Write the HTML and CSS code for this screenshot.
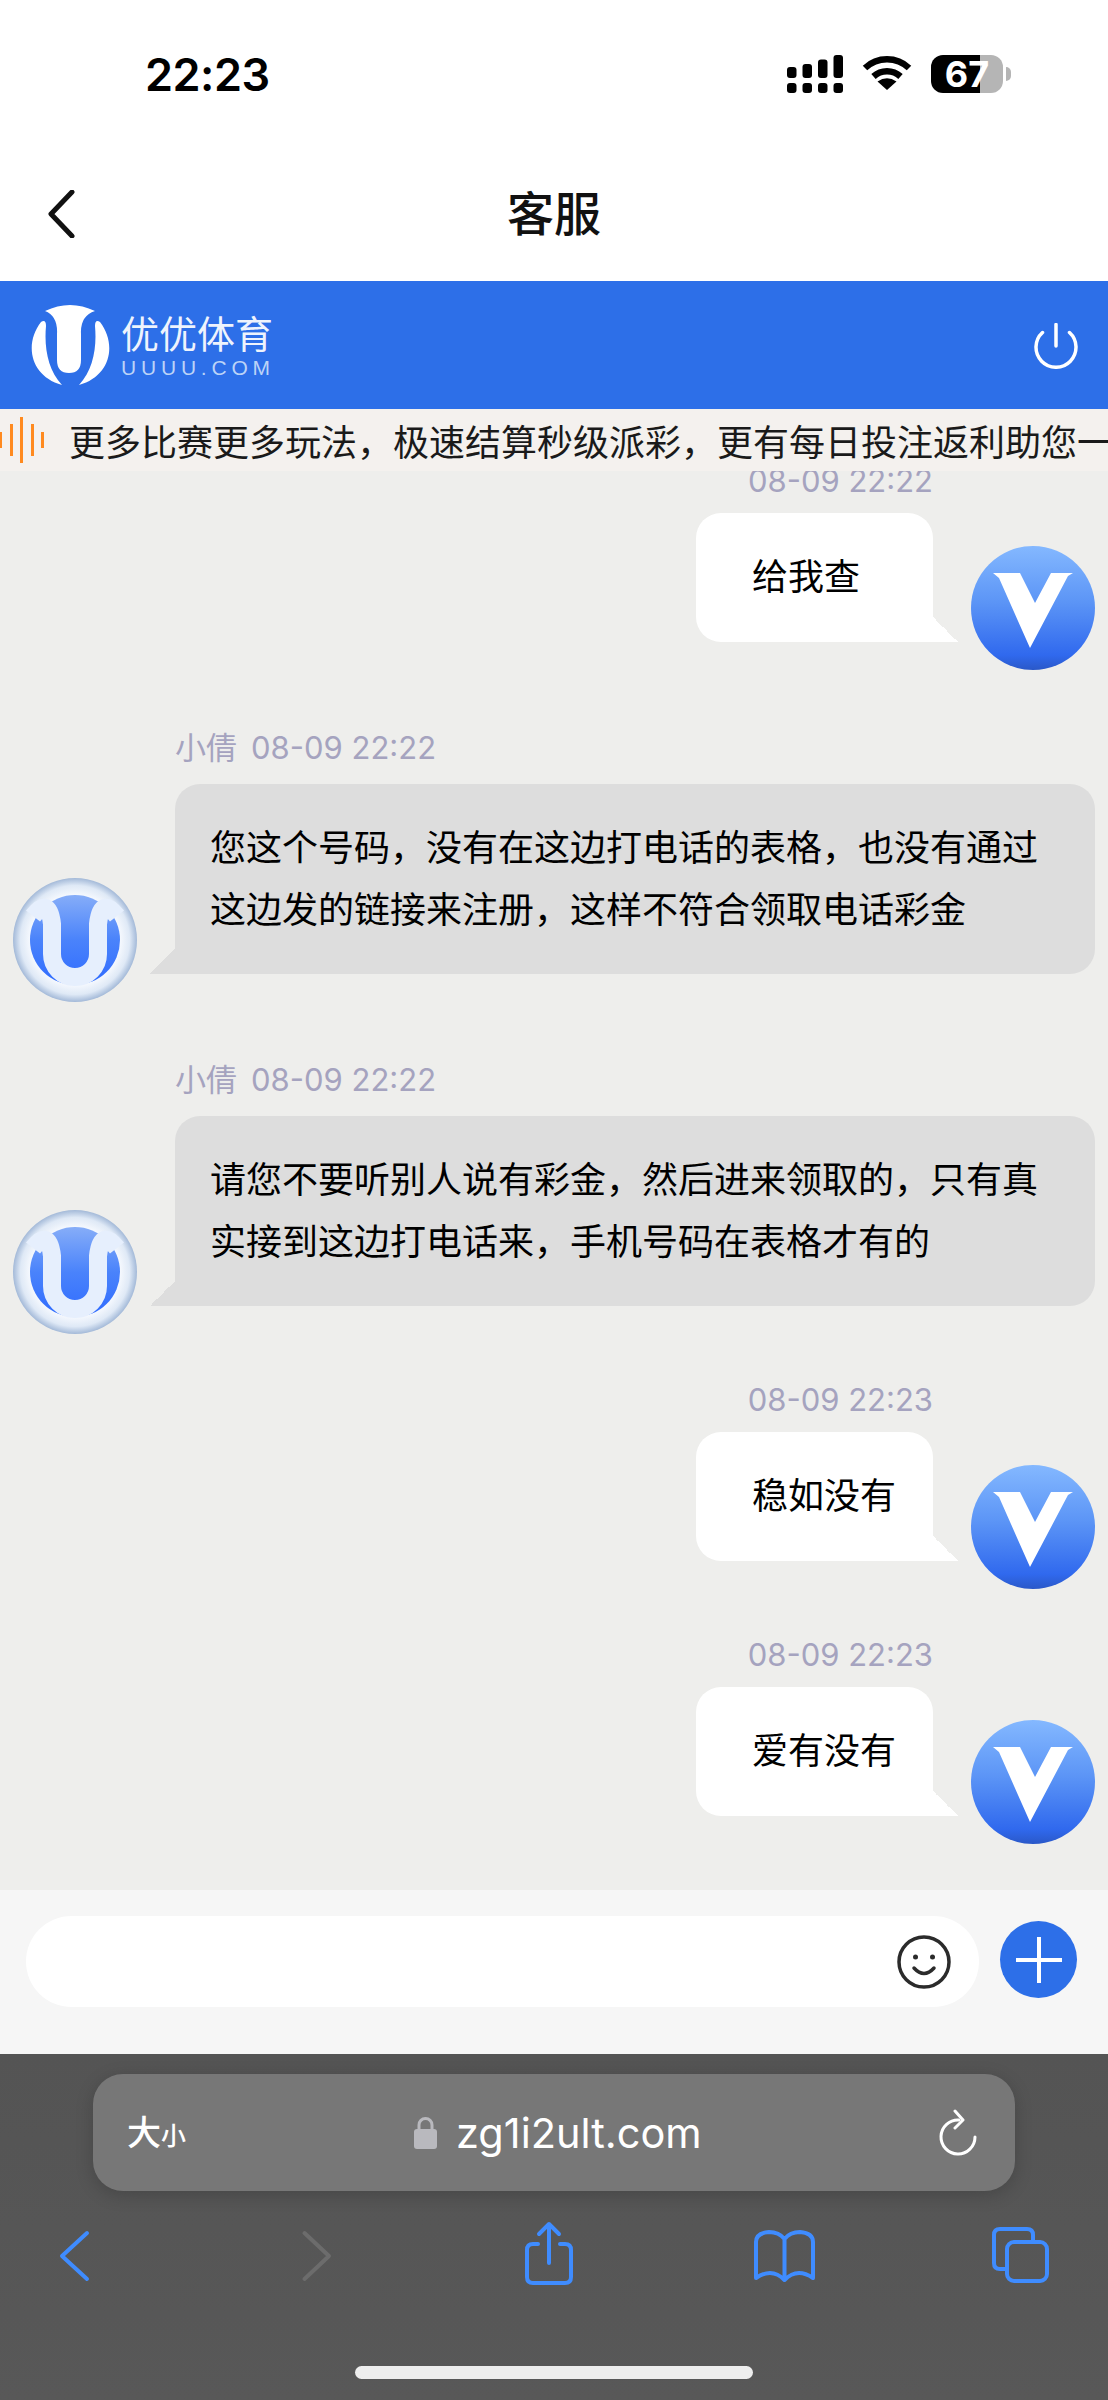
FILE: index.html
```html
<!DOCTYPE html>
<html lang="zh-CN">
<head>
  <meta charset="UTF-8" />
  <meta name="viewport" content="width=device-width, initial-scale=1.0"/>
  <title>客服</title>
  <link rel="stylesheet" href="styles.css">
</head>
<body>

  <svg class="defs" width="0" height="0">
    <defs>
      <linearGradient id="vBlue" x1="0" y1="0" x2="0" y2="1">
        <stop offset="0" stop-color="#84b8ff"/>
        <stop offset="0.45" stop-color="#5c95f6"/>
        <stop offset="0.88" stop-color="#3069ee"/>
        <stop offset="1" stop-color="#2a58c8"/>
      </linearGradient>
      <radialGradient id="uRing" cx="0.5" cy="0.5" r="0.5">
        <stop offset="0.72" stop-color="#f6f9fe"/>
        <stop offset="0.88" stop-color="#dfe9f6"/>
        <stop offset="1" stop-color="#a3b9d8"/>
      </radialGradient>
      <linearGradient id="uBlue" x1="0" y1="0" x2="0" y2="1">
        <stop offset="0" stop-color="#86adf8"/>
        <stop offset="0.5" stop-color="#4a83fb"/>
        <stop offset="1" stop-color="#2f6bff"/>
      </linearGradient>
      <symbol id="avatar-v" viewBox="0 0 124 124">
        <circle cx="62" cy="62" r="62" fill="url(#vBlue)"/>
        <path d="M22 27H49L64 57L80 27H102L97 30L59 102L28 32Z" fill="#fff"/>
      </symbol>
      <symbol id="avatar-u" viewBox="0 0 124 124">
        <circle cx="62" cy="62" r="62" fill="url(#uRing)"/>
        <circle cx="62" cy="62" r="45" fill="url(#uBlue)"/>
        <path d="M20 38Q36 18 39 46V76A23 23 0 0 0 85 76V46Q88 18 104 38" fill="none" stroke="#e6effd" stroke-width="18"/>
      </symbol>
    </defs>
  </svg>

  <div class="phone">
    <div class="status-bar">
      <span class="time">22:23</span>
      <div class="status-icons">
        <svg class="signal" width="56" height="38" viewBox="0 0 56 38" fill="#000">
          <rect x="0" y="12" width="9.5" height="11" rx="3"/>
          <rect x="15.5" y="9" width="9.5" height="14" rx="3"/>
          <rect x="31" y="4.5" width="9.5" height="18.5" rx="3"/>
          <rect x="46.5" y="0" width="9.5" height="23" rx="3"/>
          <rect x="0" y="28" width="9.5" height="10" rx="3"/>
          <rect x="15.5" y="28" width="9.5" height="10" rx="3"/>
          <rect x="31" y="28" width="9.5" height="10" rx="3"/>
          <rect x="46.5" y="28" width="9.5" height="10" rx="3"/>
        </svg>
        <svg class="wifi" width="50" height="35" viewBox="0 0 50 35">
          <path d="M3 13A32 32 0 0 1 47 13M11.5 21.5A20 20 0 0 1 38.5 21.5" fill="none" stroke="#000" stroke-width="6.5"/>
          <path d="M25 35L15.5 26.5Q25 20 34.5 26.5Z" fill="#000"/>
        </svg>
        <div class="battery">67</div>
      </div>
    </div>

    <div class="nav">
      <svg class="nav-back" width="28" height="48" viewBox="0 0 28 48">
        <path d="M25 2L4 24L25 46" fill="none" stroke="#111" stroke-width="5" stroke-linecap="round" stroke-linejoin="round"/>
      </svg>
      <h1 class="nav-title">客服</h1>
    </div>

    <div class="brand-bar">
      <div class="logo">
        <svg width="81" height="82" viewBox="0 0 81 82" fill="#fff">
          <path d="M15 7Q40 -5 65 7Q50 12 51 30V56Q51 69 39 69Q27 69 27 56V30Q28 12 15 7Z"/>
          <path d="M11 18C-6 40 0 72 32 81C18 66 14 44 16 22Q16 15 11 18Z"/>
          <path d="M70 18C87 40 81 72 49 81C63 66 67 44 65 22Q65 15 70 18Z"/>
        </svg>
        <div class="logo-text">
          <span class="logo-name">优优体育</span>
          <span class="logo-url">UUUU.COM</span>
        </div>
      </div>
      <svg class="power" width="44" height="46" viewBox="0 0 44 46">
        <path d="M8.5 9.5A20 20 0 1 0 35.5 9.5M22 1.5V23" fill="none" stroke="#fff" stroke-width="3.5" stroke-linecap="round"/>
      </svg>
    </div>

    <div class="notice">
      <svg class="wave" width="45" height="46" viewBox="0 0 45 46" fill="#ff8a1f">
        <rect x="-1" y="15" width="3" height="16"/>
        <rect x="10" y="7" width="3" height="32"/>
        <rect x="20" y="0" width="3" height="46"/>
        <rect x="31" y="7" width="3" height="32"/>
        <rect x="41" y="15" width="3" height="16"/>
      </svg>
      <p class="notice-text">更多比赛更多玩法，极速结算秒级派彩，更有每日投注返利助您一臂之力</p>
    </div>

    <div class="chat">
      <div class="msg msg-right">
        <div class="msg-body">
          <div class="msg-meta">08-09 22:22</div>
          <div class="bubble bubble-me">给我查</div>
        </div>
        <svg class="avatar"><use href="#avatar-v"/></svg>
      </div>

      <div class="msg msg-left">
        <svg class="avatar"><use href="#avatar-u"/></svg>
        <div class="msg-body">
          <div class="msg-meta"><span class="msg-name">小倩</span>08-09 22:22</div>
          <div class="bubble bubble-cs">您这个号码，没有在这边打电话的表格，也没有通过这边发的链接来注册，这样不符合领取电话彩金</div>
        </div>
      </div>

      <div class="msg msg-left">
        <svg class="avatar"><use href="#avatar-u"/></svg>
        <div class="msg-body">
          <div class="msg-meta"><span class="msg-name">小倩</span>08-09 22:22</div>
          <div class="bubble bubble-cs">请您不要听别人说有彩金，然后进来领取的，只有真实接到这边打电话来，手机号码在表格才有的</div>
        </div>
      </div>

      <div class="msg msg-right">
        <div class="msg-body">
          <div class="msg-meta">08-09 22:23</div>
          <div class="bubble bubble-me">稳如没有</div>
        </div>
        <svg class="avatar"><use href="#avatar-v"/></svg>
      </div>

      <div class="msg msg-right">
        <div class="msg-body">
          <div class="msg-meta">08-09 22:23</div>
          <div class="bubble bubble-me">爱有没有</div>
        </div>
        <svg class="avatar"><use href="#avatar-v"/></svg>
      </div>
    </div>

    <div class="composer">
      <div class="composer-input">
        <svg width="54" height="54" viewBox="0 0 54 54">
          <circle cx="27" cy="27" r="25" fill="none" stroke="#2b2b2b" stroke-width="3.5"/>
          <circle cx="18.5" cy="22" r="2.5" fill="#2b2b2b"/>
          <circle cx="35.5" cy="22" r="2.5" fill="#2b2b2b"/>
          <path d="M17 33Q27 44 37 33" fill="none" stroke="#2b2b2b" stroke-width="3.5" stroke-linecap="round"/>
        </svg>
      </div>
      <div class="composer-add">
        <svg width="46" height="46" viewBox="0 0 46 46">
          <path d="M0 23H46M23 0V46" stroke="#fff" stroke-width="4"/>
        </svg>
      </div>
    </div>

    <div class="safari">
      <div class="url-bar">
        <span class="aa">大<small>小</small></span>
        <div class="url">
          <svg width="23" height="33" viewBox="0 0 23 33">
            <path d="M5 15V9A6.5 6.5 0 0 1 18 9V15" fill="none" stroke="#b9b9be" stroke-width="3"/>
            <rect x="0" y="13" width="23" height="20" rx="3" fill="#b9b9be"/>
          </svg>
          <span>zg1i2ult.com</span>
        </div>
        <svg class="reload" width="40" height="48" viewBox="0 0 40 48">
          <path d="M21 11A17 17 0 1 0 37 28" fill="none" stroke="#fff" stroke-width="3" stroke-linecap="round"/>
          <path d="M17 2L25 11L17 19" fill="none" stroke="#fff" stroke-width="3" stroke-linecap="round" stroke-linejoin="round"/>
        </svg>
      </div>
      <div class="toolbar">
        <svg width="70" height="70" viewBox="0 0 70 70">
          <path d="M48 13L23 36L48 59" class="tool-line"/>
        </svg>
        <svg width="70" height="70" viewBox="0 0 70 70">
          <path d="M28.5 13L53 36L28.5 59" class="tool-line tool-off"/>
        </svg>
        <svg width="70" height="70" viewBox="0 0 70 70">
          <path d="M26 24H21Q15 24 15 30V57Q15 63 21 63H53Q59 63 59 57V30Q59 24 53 24H48M37 4V43M27 14L37 4L47 14" class="tool-line"/>
        </svg>
        <svg width="70" height="70" viewBox="0 0 70 70">
          <path d="M35.5 19Q30 12 20 12Q7 13 7 22V58Q23 47 35.5 60Q48 47 64 58V22Q64 13 51 12Q41 12 35.5 19ZM35.5 19V59" class="tool-line"/>
        </svg>
        <svg width="70" height="70" viewBox="0 0 70 70">
          <path d="M22 49H15Q9 49 9 43V15Q9 9 15 9H42Q48 9 48 15V22" class="tool-line"/>
          <rect x="22" y="22" width="40" height="39" rx="7" class="tool-line"/>
        </svg>
      </div>
      <div class="home-bar"></div>
    </div>
  </div>

</body>
</html>
```

FILE: styles.css
```css
* { box-sizing: border-box; }
html, body { margin: 0; padding: 0; }
body { font-family: "Noto Sans CJK SC", sans-serif; color: #000; background: #fff; }
.defs { position: absolute; }
.phone { width: 1108px; height: 2400px; display: flex; flex-direction: column; overflow: hidden; }

/* ios status bar */
.status-bar { height: 146px; flex: none; display: flex; justify-content: space-between; align-items: flex-start; padding: 55px 105px 0 145px; }
.time { font-family: Inter, sans-serif; font-weight: 600; font-size: 45px; line-height: 40px; letter-spacing: -0.5px; }
.status-icons { display: flex; align-items: center; }
.wifi { margin-left: 19px; margin-top: -3px; }
.battery {
  position: relative;
  width: 72px;
  height: 38px;
  margin-left: 19px;
  border-radius: 12px;
  background: linear-gradient(to right, #000 68%, #b5b5b5 68%);
  color: #fff;
  font-family: Inter, sans-serif;
  font-weight: 700;
  font-size: 36px;
  line-height: 38px;
  text-align: center;
}
.battery::after {
  content: "";
  position: absolute;
  right: -8px;
  top: 12px;
  width: 5px;
  height: 14px;
  border-radius: 0 7px 7px 0;
  background: #b5b5b5;
}

/* title row */
.nav { height: 135px; flex: none; position: relative; display: flex; align-items: center; justify-content: center; }
.nav-back { position: absolute; left: 47px; top: 44px; }
.nav-title { margin: 0; font-size: 47px; font-weight: 500; color: #111; line-height: 60px; padding-bottom: 6px; }

/* blue header */
.brand-bar { height: 128px; flex: none; background: #2d6fe8; display: flex; align-items: center; justify-content: space-between; padding: 0 30px; }
.logo { display: flex; align-items: center; gap: 10px; }
.logo-text { display: flex; flex-direction: column; gap: 2px; color: #fff; }
.logo-name { font-size: 38px; line-height: 44px; opacity: .92; }
.logo-url { font-family: "Liberation Sans", sans-serif; font-size: 21px; line-height: 24px; letter-spacing: 4.8px; color: #bcd3f7; }
.power { margin-top: 2px; }

/* notice */
.notice { height: 62px; flex: none; background: #f4f1ee; display: flex; align-items: center; gap: 24px; overflow: hidden; }
.wave { flex: none; }
.notice-text { margin: 0; font-size: 36px; line-height: 62px; color: #1a1a1a; white-space: nowrap; }

/* messages */
.chat { flex: 1; min-height: 0; background: #eeeeec; display: flex; flex-direction: column; justify-content: flex-end; padding: 0 13px 74px; overflow: hidden; }
.msg { display: flex; align-items: flex-end; gap: 38px; flex: none; }
.msg-right { justify-content: flex-end; margin-top: 76px; }
.msg-left { margin-top: 88px; }
.msg-body { display: flex; flex-direction: column; }
.msg-right .msg-body { align-items: flex-end; }
.msg-meta { font-family: Inter, "Noto Sans CJK SC", sans-serif; font-size: 31px; line-height: 36px; color: #a5a3bf; margin-bottom: 14px; }
.msg-left .msg-meta { margin-bottom: 18px; }
.msg-name { margin-right: 14px; }
.avatar { width: 124px; height: 124px; flex: none; margin-bottom: -28px; }

.bubble { position: relative; font-size: 36px; line-height: 62px; border-radius: 25px; padding: 30px 36px 36px 35px; }
.bubble-me { width: 237px; height: 129px; padding-left: 56px; padding-right: 0; background: #fff; border-bottom-right-radius: 0; }
.bubble-cs { width: 920px; background: #ddd; border-bottom-left-radius: 0; }
.bubble::after { content: ""; position: absolute; bottom: 0; width: 25px; height: 25px; }
.bubble-me::after { right: -25px; background: linear-gradient(to top right, #fff 50%, transparent 50%); }
.bubble-cs::after { left: -25px; background: linear-gradient(to top left, #ddd 50%, transparent 50%); }

/* input row */
.composer { height: 164px; flex: none; background: #f6f6f6; display: flex; gap: 21px; padding: 26px 31px 0 26px; }
.composer-input { width: 953px; height: 91px; border-radius: 46px; background: #fff; display: flex; align-items: center; justify-content: flex-end; padding-right: 28px; }
.composer-add { width: 77px; height: 77px; margin-top: 5px; border-radius: 50%; background: #2d6fe8; display: flex; align-items: center; justify-content: center; }

/* safari chrome */
.safari { height: 346px; flex: none; background: linear-gradient(#545454, #585858); display: flex; flex-direction: column; padding-top: 20px; }
.url-bar { width: 922px; height: 117px; margin-left: 93px; border-radius: 30px; background: #777; box-shadow: 0 4px 18px rgba(0, 0, 0, .18); display: flex; align-items: center; justify-content: space-between; position: relative; padding: 0 37px 0 34px; color: #fff; }
.aa { font-size: 34px; line-height: 40px; font-weight: 500; }
.aa small { font-size: 25px; }
.url { position: absolute; left: 321px; top: 0; height: 117px; display: flex; align-items: center; gap: 19px; font-family: Inter, sans-serif; font-size: 41.5px; }
.toolbar { display: flex; justify-content: space-between; padding: 0 53px 0 39px; margin-top: 29px; }
.tool-line { fill: none; stroke: #3f8cff; stroke-width: 4; stroke-linecap: round; stroke-linejoin: round; }
.tool-off { stroke: #6c6c6c; }
.home-bar { width: 398px; height: 13px; border-radius: 7px; background: #eee; margin: 76px 0 0 355px; }
```
